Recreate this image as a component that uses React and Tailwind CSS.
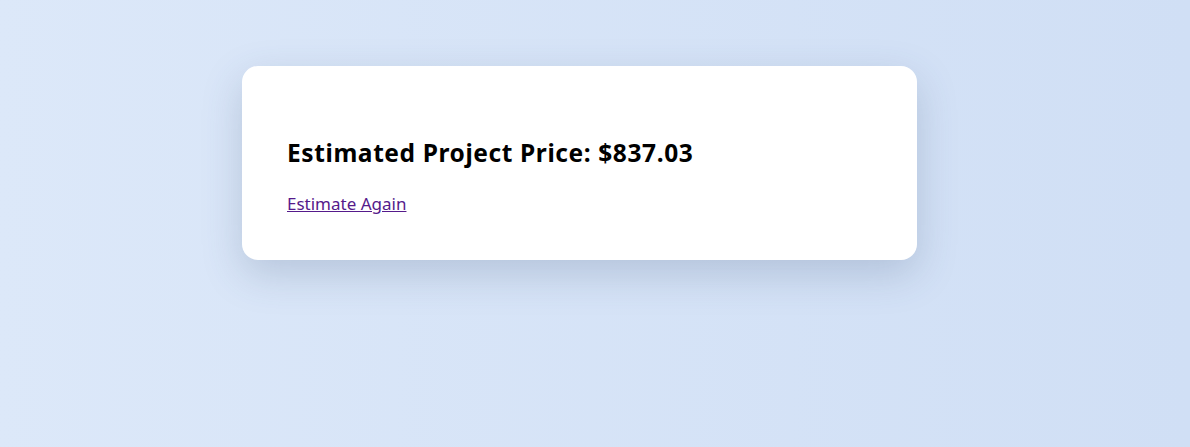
import React from 'react';

export default function App() {
  return (
    <div className="min-h-screen w-full bg-gradient-to-r from-[#dce8f9] to-[#d0dff5] pt-[66px] pl-[242px]" style={{ fontFamily: '"Noto Sans", "Open Sans", sans-serif' }}>
      <div className="w-[675px] bg-white rounded-[16px] shadow-[0_14px_40px_rgba(60,80,120,0.22)] px-[45px] pt-[71px] pb-[44px]">
        <h2 className="text-[24.5px] font-bold text-black leading-[32px] tracking-[0.6px]">Estimated Project Price: $837.03</h2>
        <a href="#" className="inline-block mt-[24px] text-[17px] leading-[22px] text-[#551a8b] underline">Estimate Again</a>
      </div>
    </div>
  );
}
